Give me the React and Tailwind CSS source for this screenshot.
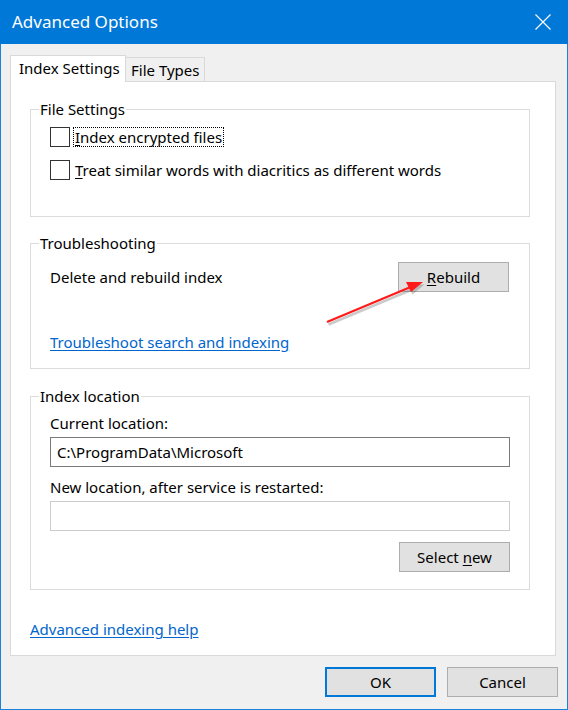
import React from "react";

const font = { fontFamily: '"Noto Sans", "Open Sans", Arial, sans-serif' };

function GroupBox({ title, className = "", children }) {
  return (
    <fieldset
      className={`border border-[#dcdcdc] ml-[19px] mr-[25px] px-0 ${className}`}
    >
      <legend className="ml-[8px] px-[1px] leading-[20px]">{title}</legend>
      <div className="px-[19px]">{children}</div>
    </fieldset>
  );
}

function Checkbox({ label, mnemonic, focused }) {
  return (
    <div className="flex items-center h-[20px]">
      <span className="w-[20px] h-[20px] border border-[#333] bg-white shrink-0" />
      <span
        className={`ml-[3px] px-[1px] leading-[18px] border ${
          focused ? "border-dotted border-black" : "border-transparent"
        }`}
      >
        <u className="underline-offset-2">{mnemonic}</u>
        {label}
      </span>
    </div>
  );
}

function Button({ children, primary = false, className = "" }) {
  return (
    <button
      className={`w-[111px] h-[30px] bg-[#e1e1e1] text-black leading-none ${
        primary ? "border-2 border-[#0078d7]" : "border border-[#adadad]"
      } ${className}`}
    >
      {children}
    </button>
  );
}

export default function App() {
  return (
    <div
      className="relative w-[568px] h-[710px] bg-[#f0f0f0] border-x border-b border-[#1883d7] flex flex-col text-[15px] text-black"
      style={font}
    >
      {/* Title bar */}
      <div className="h-[44px] bg-[#0078d7] flex items-center justify-between -mx-px pl-[12px] pr-[17px] shrink-0">
        <span className="text-white text-[17px]">Advanced Options</span>
        <svg width="16" height="16" viewBox="0 0 16 16">
          <path d="M0.5 0.5 L15.5 15.5 M15.5 0.5 L0.5 15.5" stroke="#fff" strokeWidth="1.2" />
        </svg>
      </div>

      {/* Tabs */}
      <div className="px-[9px] pt-[11px]">
        <div className="flex items-end whitespace-nowrap">
          <div className="relative z-10 -mb-px h-[27px] w-[116px] bg-white border-x border-t border-[#d9d9d9] flex items-center pl-[8px] pb-[2px]">
            Index Settings
          </div>
          <div className="h-[24px] w-[79px] bg-[#f0f0f0] border-r border-t border-[#d9d9d9] flex items-center pl-[5px] pt-[2px]">
            File Types
          </div>
        </div>

        {/* Panel */}
        <div className="w-[546px] h-[575px] bg-white border border-[#d9d9d9] flex flex-col">
          <GroupBox title="File Settings" className="mt-[17px] pb-[36px]">
            <div className="mt-[8px]">
              <Checkbox mnemonic="I" label="ndex encrypted files" focused />
            </div>
            <div className="mt-[13px]">
              <Checkbox
                mnemonic="T"
                label="reat similar words with diacritics as different words"
              />
            </div>
          </GroupBox>

          <GroupBox title="Troubleshooting" className="mt-[16px] pb-[16px]">
            <div className="mt-[9px] flex items-center justify-between h-[30px] pr-[1px]">
              <span>Delete and rebuild index</span>
              <Button>
                <u className="underline-offset-2">R</u>ebuild
              </Button>
            </div>
            <div className="mt-[40px] leading-[20px]">
              <a className="text-[#0066cc] underline underline-offset-2" href="#">
                Troubleshoot search and indexing
              </a>
            </div>
          </GroupBox>

          <GroupBox title="Index location" className="mt-[17px] pb-[17px]">
            <div className="mt-[7px] leading-[20px]">Current location:</div>
            <div className="mt-[4px] h-[30px] border border-[#7a7a7a] flex items-center pl-[6px]">
              C:\ProgramData\Microsoft
            </div>
            <div className="mt-[10px] leading-[20px]">
              New location, after service is restarted:
            </div>
            <div className="mt-[4px] h-[30px] border border-[#cccccc]" />
            <div className="mt-[11px] flex justify-end">
              <Button>
                Select <u className="underline-offset-2">n</u>ew
              </Button>
            </div>
          </GroupBox>

          <div className="mt-[29px] mx-[19px] leading-[20px]">
            <a className="text-[#0066cc] underline underline-offset-2" href="#">
              Advanced indexing help
            </a>
          </div>
        </div>
      </div>

      {/* Dialog buttons */}
      <div className="mt-[11px] pr-[9px] flex justify-end gap-[11px]">
        <Button primary>OK</Button>
        <Button>Cancel</Button>
      </div>

      {/* Red annotation arrow */}
      <svg
        className="absolute left-0 top-0 pointer-events-none"
        width="568"
        height="710"
        viewBox="0 0 568 710"
      >
        <g opacity="0.3" transform="translate(1.5 2.5)">
          <line x1="326" y1="322" x2="412" y2="286" stroke="#555" strokeWidth="2.5" />
          <polygon points="422,282 405,282 410,292" fill="#555" />
        </g>
        <line x1="326" y1="322" x2="412" y2="286" stroke="#ff1a1a" strokeWidth="2" />
        <polygon points="422,282 405,282 410,292" fill="#ff1a1a" />
      </svg>
    </div>
  );
}
